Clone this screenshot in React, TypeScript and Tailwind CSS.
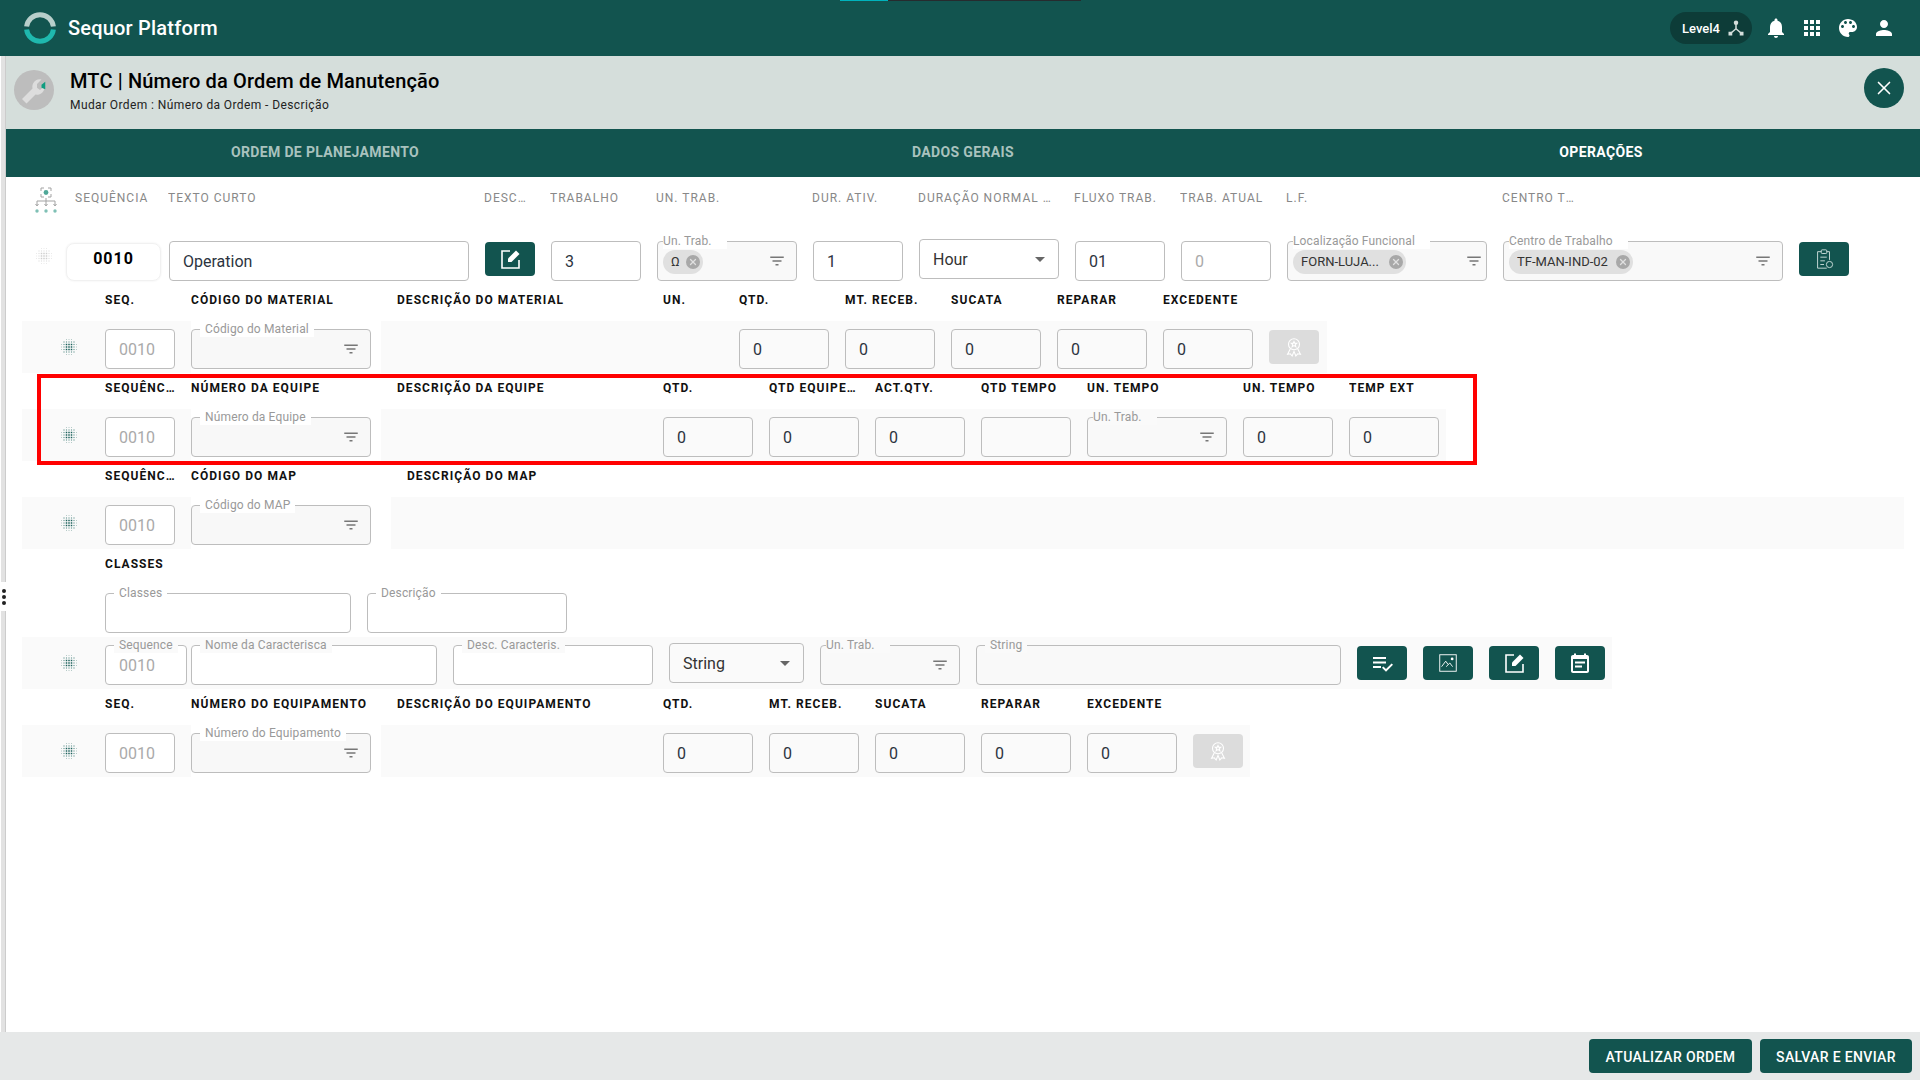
import React from 'react';
import { X } from 'lucide-react';

const teal = 'bg-[#12544f]';

const MaterialIcon: React.FC<{ d: string; className?: string }> = ({ d, className }) => (
    <svg viewBox="0 0 24 24" fill="currentColor" className={className}>
        <path d={d} />
    </svg>
);

const FilterIcon = () => (
    <MaterialIcon d="M10 18h4v-2h-4v2zM3 6v2h18V6H3zm3 7h12v-2H6v2z" className="w-[18px] h-[18px] text-[#777]" />
);

const Grip: React.FC<{ faded?: boolean }> = ({ faded }) => {
    const cells: React.ReactNode[] = [];
    for (let y = -3; y <= 3; y++) {
        for (let x = -3; x <= 3; x++) {
            const dist = Math.max(Math.abs(x), Math.abs(y));
            if (Math.abs(x) + Math.abs(y) > 4) continue;
            const size = dist <= 1 ? 1.5 : dist === 2 ? 1.1 : 0.8;
            const color = faded ? (dist <= 1 ? '#cfcfcf' : '#dedede') : dist <= 1 ? '#1c625c' : dist === 2 ? '#5f928d' : '#8fb0ac';
            cells.push(<rect key={`${x}${y}`} x={9 + x * 2.5 - size / 2} y={9 + y * 2.5 - size / 2} width={size} height={size} fill={color} />);
        }
    }
    return (
        <svg viewBox="0 0 18 18" className="w-[18px] h-[18px]">
            {cells}
        </svg>
    );
};

const OrgIcon = () => (
    <svg viewBox="0 0 24 28" className="w-6 h-7" fill="none" stroke="#a3a3a3" strokeWidth="1">
        <path d="M7 5V2h3M14 2h3v3M7 8v3h3M14 11h3V8" />
        <circle cx="12" cy="6.5" r="2.4" fill="#4fa898" stroke="none" />
        <path d="M12 12v3M3 19v-4h18v4M12 15v4" />
        <path d="M1.5 18l1.5 2 1.5-2M10.5 18l1.500 2 1.500-2M19.500 18l1.500 2 1.500-2" />
        <circle cx="3" cy="25" r="1.7" fill="#7fc0b5" stroke="none" />
        <circle cx="12" cy="25" r="1.7" fill="#7fc0b5" stroke="none" />
        <circle cx="21" cy="25" r="1.7" fill="#7fc0b5" stroke="none" />
    </svg>
);

const EditIcon = () => (
    <svg viewBox="0 0 24 24" className="w-6 h-6" fill="none" stroke="white" strokeWidth="1.6">
        <path d="M12 4H4v17h17v-8" />
        <path d="M10 15v-3.5L18 3.5 21.5 7l-8 8z" fill="white" stroke="none" />
    </svg>
);

const AwardIcon = () => (
    <svg viewBox="0 0 24 24" className="w-[22px] h-[22px]" fill="none" stroke="white" strokeWidth="1.2">
        <circle cx="12" cy="9" r="6" />
        <path d="M12 6l1 2h2l-1.6 1.5.6 2.2-2-1.2-2 1.2.6-2.2L9 8h2z" />
        <path d="M8 14l-3 6 3-.6 2 2.4 2-5 2 5 2-2.4 3 .6-3-6" />
    </svg>
);

const ClipboardIcon = () => (
    <svg viewBox="0 0 24 24" className="w-[22px] h-[22px]" fill="none" stroke="#cfe0dd" strokeWidth="1">
        <path d="M9 4H5v18h10M15 4h3v9" />
        <rect x="9" y="2" width="6" height="4" rx="1" />
        <path d="M8 10h7M8 14h5M8 18h4" />
        <circle cx="18" cy="18" r="3.4" />
    </svg>
);

const PlaylistCheckIcon = () => (
    <MaterialIcon d="M3 6h13v2H3zM3 10.5h13v2H3zM3 15h8v2H3zM21.6 12.4l1.4 1.4-7 7-4-4 1.4-1.4 2.6 2.6z" className="w-6 h-6 text-white" />
);

const ImageBoxIcon = () => (
    <svg viewBox="0 0 24 24" className="w-[22px] h-[22px]" fill="none" stroke="white" strokeWidth="1">
        <rect x="3" y="3" width="18" height="18" />
        <path d="M5 16l4.5-6 2.5 3.5M10 16l4-4 3 4" />
        <circle cx="16.5" cy="7.5" r="1.5" fill="white" stroke="none" />
    </svg>
);

const NoteCalendarIcon = () => (
    <MaterialIcon
        d="M19 4h-1V2.5h-2V4H8V2.5H6V4H5c-1.100 0-2 .9-2 2v14c0 1.100.9 2 2 2h14c1.100 0 2-.9 2-2V6c0-1.100-.9-2-2-2zm0 16H5V8h14v12zM7 10.500h10v2H7zM7 14.500h7v2H7z"
        className="w-[24px] h-[24px] text-white"
    />
);

interface FieldProps {
    w: string;
    label?: string;
    tight?: boolean;
    labelBg?: string;
    bg?: string;
    filter?: boolean;
    filterPad?: string;
    className?: string;
    children?: React.ReactNode;
}

// outlined input with the label sitting in a notch of the border
const Field: React.FC<FieldProps> = ({ w, label, tight, labelBg = 'bg-white', bg = 'bg-[#f9f9f9]', filter, filterPad = 'pr-[10px]', className = '', children }) => (
    <div className={`relative h-10 shrink-0 rounded border border-[#bdbdbd] flex items-center ${w} ${bg} ${className}`}>
        {label && (
            <span className={`absolute -top-[9px] text-xs leading-4 tracking-[0.15px] text-[#999] whitespace-nowrap ${labelBg} ${tight ? 'left-[5px] pr-[15px]' : 'left-[8px] px-[5px]'}`}>
                {label}
            </span>
        )}
        <div className="flex-1 min-w-0 flex items-center pt-px">{children}</div>
        {filter && (
            <span className={filterPad}>
                <FilterIcon />
            </span>
        )}
    </div>
);

const Value: React.FC<{ w: string; v?: string; muted?: boolean; bg?: string }> = ({ w, v, muted, bg = 'bg-[#fafafa]' }) => (
    <Field w={w} bg={bg}>
        <span className={`text-base pl-[13px] ${muted ? 'text-[#aaa]' : 'text-[#2c3440]'}`}>{v}</span>
    </Field>
);

const Seq: React.FC = () => (
    <Field w="w-[70px]" bg="bg-white">
        <span className="text-base pl-[13px] text-[#aaa]">0010</span>
    </Field>
);

const Chip: React.FC<{ text: string; w: string }> = ({ text, w }) => (
    <span className={`ml-[5px] h-6 rounded-full bg-[#e0e0e0] flex items-center justify-between pl-2 pr-[3px] text-[13px] text-[#333] ${w}`}>
        <span className="truncate">{text}</span>
        <span className="w-[14px] h-[14px] rounded-full bg-[#a8a8a8] flex items-center justify-center shrink-0">
            <X size={10} color="#e0e0e0" strokeWidth={3} />
        </span>
    </span>
);

const Select: React.FC<{ w: string; v: string; bg?: string }> = ({ w, v, bg = 'bg-white' }) => (
    <div className={`h-10 shrink-0 rounded border border-[#bdbdbd] flex items-center justify-between pl-[13px] pr-[13px] text-base text-[#333] -mt-[2px] ${w} ${bg}`}>
        <span className="pt-px">{v}</span>
        <span className="w-0 h-0 border-x-[5px] border-x-transparent border-t-[5px] border-t-[#666]" />
    </div>
);

const IconButton: React.FC<{ children: React.ReactNode; muted?: boolean }> = ({ children, muted }) => (
    <div className={`w-[50px] h-[34px] shrink-0 rounded flex items-center justify-center mt-px ${muted ? 'bg-[#dcdcdc]' : teal}`}>{children}</div>
);

const HeadCell: React.FC<{ w: string; text: string; light?: boolean }> = ({ w, text, light }) => (
    <div className={`shrink-0 truncate text-xs leading-4 ${w} ${light ? 'font-normal tracking-[1px] text-[#888]' : 'font-bold tracking-[1.05px] text-[#111]'}`}>{text}</div>
);

const GripCell = () => (
    <div className="w-[83px] shrink-0 flex justify-center pt-[9px] pl-[11px]">
        <Grip />
    </div>
);

const RowLeft = () => (
    <div className="w-[169px] h-full shrink-0 bg-[#fafafa] flex pt-2">
        <GripCell />
        <Seq />
    </div>
);

const CodeCell: React.FC<{ label: string; w?: string }> = ({ label, w = 'w-[190px]' }) => (
    <div className={`h-full shrink-0 pt-2 bg-white ${w}`}>
        <Field w="w-[180px]" label={label} filter bg="bg-[#f8f8f8]" />
    </div>
);

const tabs = [
    { label: 'ORDEM DE PLANEJAMENTO', active: false },
    { label: 'DADOS GERAIS', active: false },
    { label: 'OPERAÇÕES', active: true }
];

export default function App() {
    return (
        <div className="relative w-[1920px] h-[1080px] flex flex-col overflow-hidden bg-white font-[Roboto,sans-serif]">
            <header className={`relative h-14 shrink-0 flex items-center ${teal} text-white`}>
                <div className="absolute top-0 left-[840px] h-px w-12 bg-[#00b3bd]" />
                <div className="absolute top-0 left-[888px] h-px w-[193px] bg-[#262b2e]" />
                <svg viewBox="0 0 32 32" className="w-8 h-8 ml-6">
                    <path d="M2.600 14.500a13.500 13.500 0 0 1 26.800 0" fill="none" stroke="#b8cfcb" strokeWidth="5" />
                    <path d="M2.600 17.500a13.500 13.500 0 0 0 26.800 0" fill="none" stroke="#1fb8ae" strokeWidth="5" />
                </svg>
                <span className="ml-3 text-xl font-medium tracking-[0.2px]">Sequor Platform</span>
                <div className="ml-auto flex items-center gap-3 pr-6">
                    <div className="w-[82px] h-8 rounded-full bg-[#0d3c38] flex items-center justify-between pl-3 pr-[7px] text-[13px] font-medium">
                        <span className="pt-px">Level4</span>
                        <svg viewBox="0 0 24 24" className="w-[18px] h-[18px]" fill="none" stroke="#d5dedb" strokeWidth="2">
                            <circle cx="12" cy="5" r="3" fill="#d5dedb" stroke="none" />
                            <rect x="2" y="17" width="5" height="5" fill="#d5dedb" stroke="none" />
                            <rect x="17" y="17" width="5" height="5" fill="#d5dedb" stroke="none" />
                            <path d="M12 7v6L5 19M12 13l7 6" />
                        </svg>
                    </div>
                    <MaterialIcon className="w-6 h-6" d="M12 22c1.100 0 2-.9 2-2h-4c0 1.100.9 2 2 2zm6-6v-5c0-3.070-1.630-5.640-4.500-6.320V4c0-.830-.670-1.500-1.500-1.500s-1.500.670-1.500 1.500v.680C7.640 5.360 6 7.920 6 11v5l-2 2v1h16v-1l-2-2z" />
                    <MaterialIcon className="w-6 h-6" d="M4 8h4V4H4v4zm6 12h4v-4h-4v4zm-6 0h4v-4H4v4zm0-6h4v-4H4v4zm6 0h4v-4h-4v4zm6-10v4h4V4h-4zm-6 4h4V4h-4v4zm6 6h4v-4h-4v4zm0 6h4v-4h-4v4z" />
                    <MaterialIcon className="w-6 h-6" d="M12 3c-4.970 0-9 4.030-9 9s4.030 9 9 9c.830 0 1.500-.670 1.500-1.500 0-.390-.150-.740-.390-1.010-.230-.260-.380-.610-.380-.990 0-.830.670-1.500 1.500-1.500H16c2.760 0 5-2.240 5-5 0-4.420-4.030-8-9-8zm-5.500 9c-.830 0-1.500-.670-1.500-1.500S5.670 9 6.500 9 8 9.670 8 10.500 7.330 12 6.500 12zm3-4C8.670 8 8 7.330 8 6.500S8.670 5 9.500 5s1.500.670 1.500 1.500S10.330 8 9.500 8zm5 0c-.830 0-1.500-.670-1.500-1.500S13.670 5 14.500 5s1.500.670 1.500 1.500S15.330 8 14.500 8zm3 4c-.830 0-1.500-.670-1.500-1.500S16.670 9 17.500 9s1.500.670 1.500 1.500-.670 1.500-1.500 1.500z" />
                    <MaterialIcon className="w-6 h-6" d="M12 12c2.210 0 4-1.790 4-4s-1.790-4-4-4-4 1.790-4 4 1.790 4 4 4zm0 2c-2.670 0-8 1.340-8 4v2h16v-2c0-2.660-5.330-4-8-4z" />
                </div>
            </header>

            <div className="flex-1 min-h-0 flex">
                <div className="w-[6px] shrink-0 bg-[#e2e2e2] border-l border-l-white border-r border-r-[#cccccc]" />
                <main className="flex-1 min-w-0 flex flex-col">
                    <div className="h-[73px] shrink-0 bg-[#d5dedb] flex items-center pl-2 pr-4">
                        <div className="w-10 h-10 rounded-full bg-[#bdbdbd] flex items-center justify-center -mt-[5px]">
                            <svg viewBox="0 0 24 24" className="w-9 h-9">
                                <path d="M4 18l7-7a5 5 0 0 1 6-6l-3 3v2.500l2 1.500 3-2.500a5 5 0 0 1-6 5.500l-6 6z" fill="#dddddd" />
                                <path d="M17 8.500l2.500-2v5l-2.500-1z" fill="#0f9d80" />
                            </svg>
                        </div>
                        <div className="ml-[16px] -mt-[4px]">
                            <div className="text-xl leading-6 font-medium tracking-[0.15px] text-black">MTC | Número da Ordem de Manutenção</div>
                            <div className="mt-[4px] text-xs leading-4 tracking-[0.4px] text-[#222]">Mudar Ordem : Número da Ordem - Descrição</div>
                        </div>
                        <div className={`ml-auto w-10 h-10 rounded-full flex items-center justify-center -mt-[9px] ${teal}`}>
                            <X size={22} color="white" strokeWidth={1.8} />
                        </div>
                    </div>

                    <nav className={`h-12 shrink-0 grid grid-cols-3 ${teal}`}>
                        {tabs.map(tab => (
                            <div key={tab.label} className={`flex items-center justify-center pb-[2px] text-sm font-bold tracking-[0.35px] ${tab.active ? 'text-white' : 'text-[#a9c2be]'}`}>
                                {tab.label}
                            </div>
                        ))}
                    </nav>

                    <section className="relative flex-1 min-h-0 pl-4">
                        <div className="h-10 pt-px flex items-center">
                            <div className="w-[53px] shrink-0 pl-[12px] pt-[5px]">
                                <OrgIcon />
                            </div>
                            <HeadCell light w="w-[93px]" text="SEQUÊNCIA" />
                            <HeadCell light w="w-[316px]" text="TEXTO CURTO" />
                            <HeadCell light w="w-[66px] pr-[24px]" text="DESCRIÇÃO" />
                            <HeadCell light w="w-[106px]" text="TRABALHO" />
                            <HeadCell light w="w-[156px]" text="UN. TRAB." />
                            <HeadCell light w="w-[106px]" text="DUR. ATIV." />
                            <HeadCell light w="w-[156px] pr-[20px]" text="DURAÇÃO NORMAL DA" />
                            <HeadCell light w="w-[106px]" text="FLUXO TRAB." />
                            <HeadCell light w="w-[106px]" text="TRAB. ATUAL" />
                            <HeadCell light w="w-[216px]" text="L.F." />
                            <HeadCell light w="w-[72px]" text="CENTRO TRABALHO" />
                        </div>

                        <div className="h-16 pt-6 flex items-start gap-4">
                            <div className="w-[44px] -mr-4 shrink-0 flex justify-center pt-[6px]">
                                <Grip faded />
                            </div>
                            <div className="w-[95px] h-[38px] -mr-2 mt-[2px] shrink-0 rounded-lg border border-[#f1f1f1] shadow-[0_0_2px_rgba(0,0,0,0.08)] flex items-center justify-center pb-[7px] text-base font-bold tracking-[1px] text-black">
                                0010
                            </div>
                            <Value w="w-[300px]" v="Operation" bg="bg-white" />
                            <IconButton>
                                <EditIcon />
                            </IconButton>
                            <Value w="w-[90px]" v="3" bg="bg-white" />
                            <Field w="w-[140px]" label="Un. Trab." tight filter>
                                <Chip text="Ω" w="w-10" />
                            </Field>
                            <Value w="w-[90px]" v="1" bg="bg-white" />
                            <Select w="w-[140px]" v="Hour" />
                            <Value w="w-[90px]" v="01" bg="bg-white" />
                            <Value w="w-[90px]" v="0" muted bg="bg-white" />
                            <Field w="w-[200px]" label="Localização Funcional" tight filter filterPad="pr-[3px]">
                                <Chip text="FORN-LUJA..." w="w-[113px]" />
                            </Field>
                            <Field w="w-[280px]" label="Centro de Trabalho" tight filter>
                                <Chip text="TF-MAN-IND-02" w="w-[124px]" />
                            </Field>
                            <IconButton>
                                <ClipboardIcon />
                            </IconButton>
                        </div>

                        <div className="h-10 pt-[11px] pl-[83px] flex">
                            <HeadCell w="w-[86px]" text="SEQ." />
                            <HeadCell w="w-[206px]" text="CÓDIGO DO MATERIAL" />
                            <HeadCell w="w-[266px]" text="DESCRIÇÃO DO MATERIAL" />
                            <HeadCell w="w-[76px]" text="UN." />
                            <HeadCell w="w-[106px]" text="QTD." />
                            <HeadCell w="w-[106px]" text="MT. RECEB." />
                            <HeadCell w="w-[106px]" text="SUCATA" />
                            <HeadCell w="w-[106px]" text="REPARAR" />
                            <HeadCell w="w-[106px]" text="EXCEDENTE" />
                        </div>
                        <div className="h-[52px] flex">
                            <RowLeft />
                            <CodeCell label="Código do Material" />
                            <div className="w-[946px] h-full shrink-0 bg-[#fafafa] pt-2 pl-[358px] flex gap-4">
                                <Value w="w-[90px]" v="0" />
                                <Value w="w-[90px]" v="0" />
                                <Value w="w-[90px]" v="0" />
                                <Value w="w-[90px]" v="0" />
                                <Value w="w-[90px]" v="0" />
                                <IconButton muted>
                                    <AwardIcon />
                                </IconButton>
                            </div>
                        </div>

                        <div className="h-9 pt-[7px] pl-[83px] flex">
                            <HeadCell w="w-[70px] mr-4" text="SEQUÊNCIA" />
                            <HeadCell w="w-[206px]" text="NÚMERO DA EQUIPE" />
                            <HeadCell w="w-[266px]" text="DESCRIÇÃO DA EQUIPE" />
                            <HeadCell w="w-[90px] mr-4" text="QTD." />
                            <HeadCell w="w-[90px] mr-4" text="QTD EQUIPES EXTRA" />
                            <HeadCell w="w-[106px]" text="ACT.QTY." />
                            <HeadCell w="w-[106px]" text="QTD TEMPO" />
                            <HeadCell w="w-[156px]" text="UN. TEMPO" />
                            <HeadCell w="w-[106px]" text="UN. TEMPO" />
                            <HeadCell w="w-[90px]" text="TEMP EXT" />
                        </div>
                        <div className="h-[52px] flex">
                            <RowLeft />
                            <CodeCell label="Número da Equipe" />
                            <div className="w-[1065px] h-full shrink-0 bg-[#fafafa] pt-2 pl-[282px] flex gap-4">
                                <Value w="w-[90px]" v="0" />
                                <Value w="w-[90px]" v="0" />
                                <Value w="w-[90px]" v="0" />
                                <Value w="w-[90px]" />
                                <Field w="w-[140px]" label="Un. Trab." tight filter labelBg="bg-[#fafafa]" />
                                <Value w="w-[90px]" v="0" />
                                <Value w="w-[90px]" v="0" />
                            </div>
                        </div>

                        <div className="h-9 pt-[7px] pl-[83px] flex">
                            <HeadCell w="w-[70px] mr-4" text="SEQUÊNCIA" />
                            <HeadCell w="w-[216px]" text="CÓDIGO DO MAP" />
                            <HeadCell w="w-[266px]" text="DESCRIÇÃO DO MAP" />
                        </div>
                        <div className="h-[52px] flex">
                            <RowLeft />
                            <CodeCell label="Código do MAP" w="w-[200px]" />
                            <div className="w-[1513px] h-full shrink-0 bg-[#fafafa]" />
                        </div>

                        <div className="h-11 pt-[7px] pl-[83px]">
                            <HeadCell w="w-[200px]" text="CLASSES" />
                        </div>
                        <div className="h-11 pl-[83px] flex gap-4">
                            <Field w="w-[246px]" label="Classes" bg="bg-white" />
                            <Field w="w-[200px]" label="Descrição" bg="bg-white" />
                        </div>
                        <div className="w-[1590px] h-[52px] bg-[#fafafa] flex items-start pt-2">
                            <GripCell />
                            <Field w="w-[82px] mr-1" label="Sequence" bg="bg-white" labelBg="bg-[#fafafa]">
                                <span className="text-base pl-[13px] text-[#aaa]">0010</span>
                            </Field>
                            <Field w="w-[246px] mr-4" label="Nome da Caracterisca" bg="bg-white" labelBg="bg-[#fafafa]" />
                            <Field w="w-[200px] mr-4" label="Desc. Caracteris." bg="bg-white" labelBg="bg-[#fafafa]" />
                            <Select w="w-[135px] mr-4" v="String" bg="bg-[#fafafa]" />
                            <Field w="w-[140px] mr-4" label="Un. Trab." tight filter labelBg="bg-[#fafafa]" />
                            <Field w="w-[365px] mr-4" label="String" labelBg="bg-[#fafafa]" />
                            <div className="flex gap-4">
                                <IconButton>
                                    <PlaylistCheckIcon />
                                </IconButton>
                                <IconButton>
                                    <ImageBoxIcon />
                                </IconButton>
                                <IconButton>
                                    <EditIcon />
                                </IconButton>
                                <IconButton>
                                    <NoteCalendarIcon />
                                </IconButton>
                            </div>
                        </div>

                        <div className="h-9 pt-[7px] pl-[83px] flex">
                            <HeadCell w="w-[86px]" text="SEQ." />
                            <HeadCell w="w-[206px]" text="NÚMERO DO EQUIPAMENTO" />
                            <HeadCell w="w-[266px]" text="DESCRIÇÃO DO EQUIPAMENTO" />
                            <HeadCell w="w-[106px]" text="QTD." />
                            <HeadCell w="w-[106px]" text="MT. RECEB." />
                            <HeadCell w="w-[106px]" text="SUCATA" />
                            <HeadCell w="w-[106px]" text="REPARAR" />
                            <HeadCell w="w-[106px]" text="EXCEDENTE" />
                        </div>
                        <div className="h-[52px] flex">
                            <RowLeft />
                            <CodeCell label="Número do Equipamento" />
                            <div className="w-[869px] h-full shrink-0 bg-[#fafafa] pt-2 pl-[282px] flex gap-4">
                                <Value w="w-[90px]" v="0" />
                                <Value w="w-[90px]" v="0" />
                                <Value w="w-[90px]" v="0" />
                                <Value w="w-[90px]" v="0" />
                                <Value w="w-[90px]" v="0" />
                                <IconButton muted>
                                    <AwardIcon />
                                </IconButton>
                            </div>
                        </div>

                        {/* red highlight drawn over the team row */}
                        <div className="absolute left-[31px] top-[197px] w-[1440px] h-[91px] border-4 border-[#ff0000] pointer-events-none" />
                    </section>
                </main>
            </div>

            <footer className="h-12 shrink-0 bg-[#e6e8e8] flex items-center justify-end gap-2 pr-2">
                <div className={`w-[163px] h-[34px] rounded flex items-center justify-center pt-px text-sm font-medium tracking-[0.35px] text-white ${teal}`}>ATUALIZAR ORDEM</div>
                <div className={`w-[152px] h-[34px] rounded flex items-center justify-center pt-px text-sm font-medium tracking-[0.35px] text-white ${teal}`}>SALVAR E ENVIAR</div>
            </footer>

            {/* sidebar drag handle */}
            <div className="absolute left-0 top-[582px] w-[7px] h-[29px] bg-white flex flex-col items-center justify-center gap-[2px] pl-px">
                <span className="w-1 h-1 rounded-full bg-[#222]" />
                <span className="w-1 h-1 rounded-full bg-[#222]" />
                <span className="w-1 h-1 rounded-full bg-[#222]" />
            </div>
        </div>
    );
}
